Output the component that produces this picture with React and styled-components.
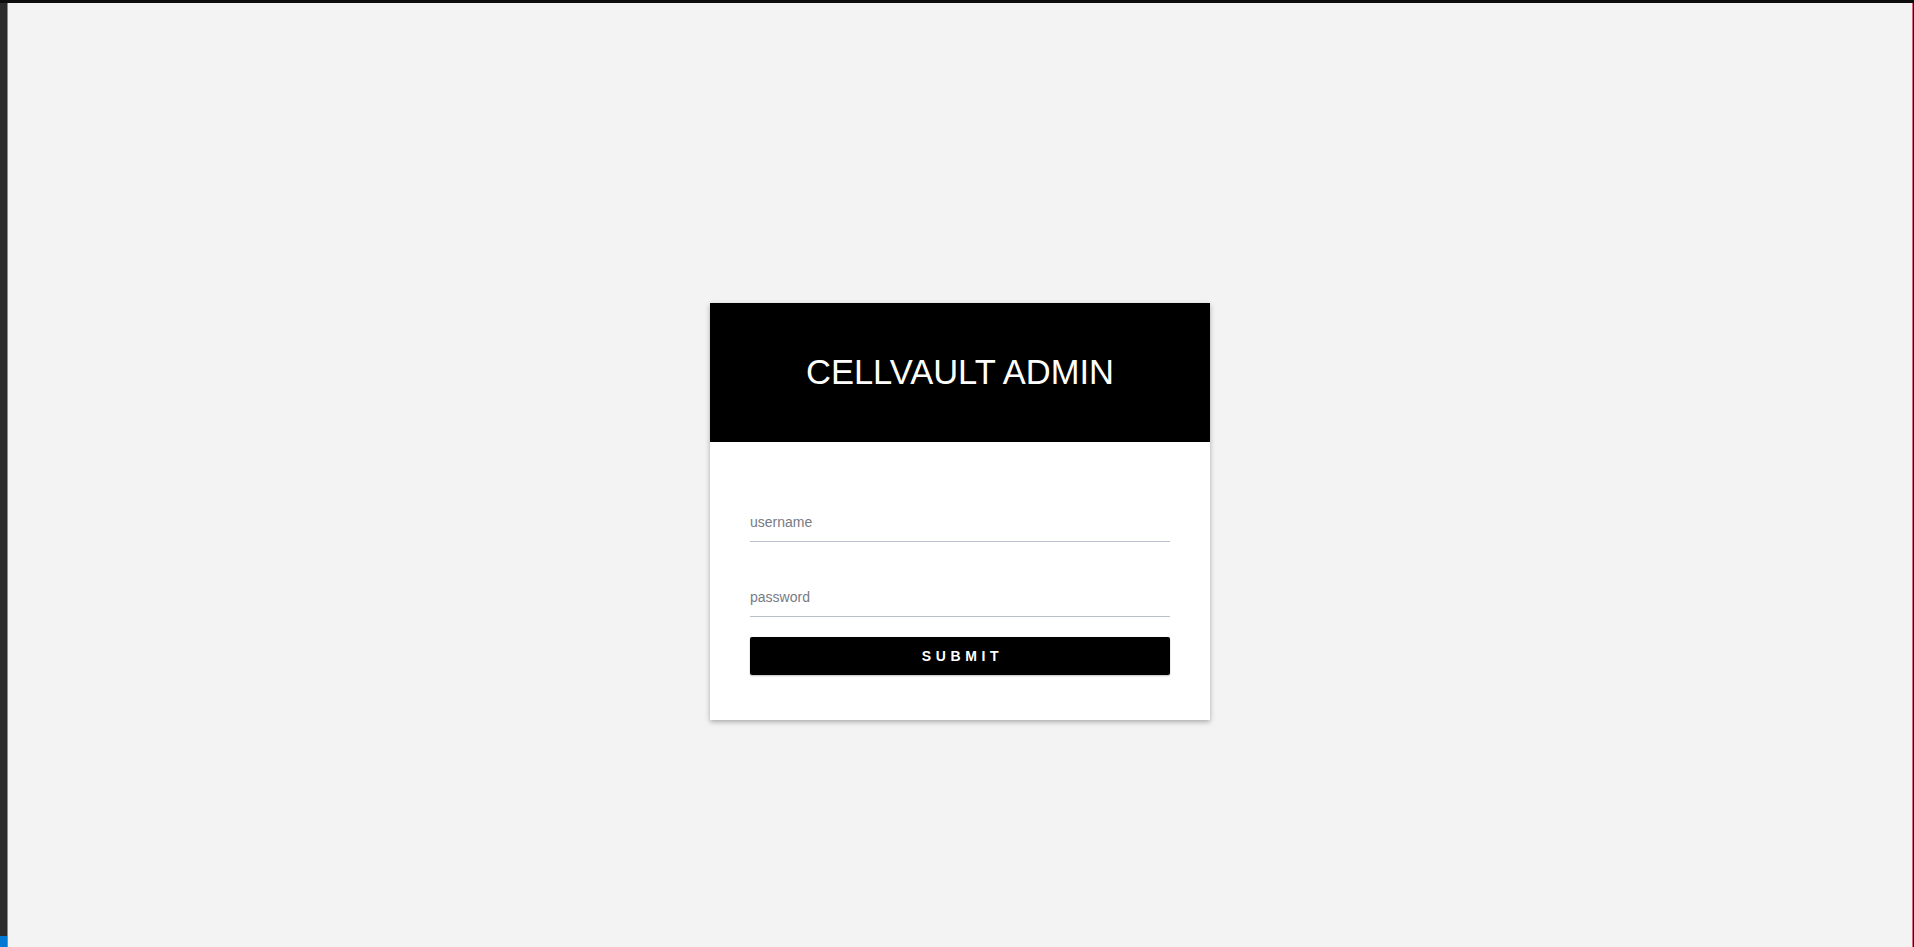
import React from "react";
import styled, { createGlobalStyle } from "styled-components";

const GlobalStyle = createGlobalStyle`
  html, body {
    margin: 0;
    padding: 0;
    height: 100%;
    background: #2b2b2b;
    font-family: "Liberation Sans", Arial, sans-serif;
  }
  #root {
    height: 100%;
  }
  * {
    box-sizing: border-box;
  }
`;

const Frame = styled.div`
  display: flex;
  flex-direction: column;
  height: 947px;
  width: 1914px;
`;

const TopBar = styled.div`
  height: 3px;
  background: #0d0d0d;
`;

const Row = styled.div`
  flex: 1;
  display: flex;
`;

const Rail = styled.div`
  width: 7px;
  background: #2b2b2b;
  display: flex;
  flex-direction: column;
  justify-content: flex-end;
`;

const RailBadge = styled.div`
  height: 11px;
  background: #0078d4;
`;

const Main = styled.main`
  flex: 1;
  background: #f3f3f3;
  border-left: 1px solid #d9667f;
  border-right: 1px solid #d9667f;
  display: flex;
  justify-content: center;
  align-items: flex-start;
  padding-top: 300px;
`;

const EdgeRight = styled.div`
  width: 1px;
  background: #1a1a1a;
`;

const Card = styled.div`
  width: 500px;
  background: #fff;
  box-shadow: 0 2px 5px rgba(0, 0, 0, 0.3);
`;

const Header = styled.div`
  height: 139px;
  background: #000;
  display: flex;
  align-items: center;
  justify-content: center;
`;

const Title = styled.h1`
  margin: 0;
  color: #fff;
  font-size: 34.5px;
  font-weight: 400;
  line-height: 1;
`;

const Form = styled.form`
  display: flex;
  flex-direction: column;
  padding: 58px 40px 45px;
`;

const Input = styled.input`
  height: 42px;
  border: none;
  border-bottom: 1px solid #b9bfca;
  outline: none;
  padding: 3px 0 0;
  font-family: "Liberation Sans", Arial, sans-serif;
  font-size: 14px;
  color: #333;
  background: transparent;
  margin-bottom: ${(p) => p.$gap || 0}px;

  &::placeholder {
    color: #777b84;
  }
`;

const Button = styled.button`
  height: 38px;
  border: none;
  border-radius: 2px;
  background: #000;
  color: #fff;
  font-family: "Liberation Sans", Arial, sans-serif;
  font-size: 14px;
  font-weight: 700;
  letter-spacing: 4.6px;
  padding: 0 0 0 5px;
  box-shadow: 0 1px 2px rgba(0, 0, 0, 0.25);
  cursor: pointer;
`;

export default function App() {
  return (
    <>
      <GlobalStyle />
      <Frame>
        <TopBar />
        <Row>
          <Rail>
            <RailBadge />
          </Rail>
          <Main>
            <Card>
              <Header>
                <Title>CELLVAULT ADMIN</Title>
              </Header>
              <Form onSubmit={(e) => e.preventDefault()}>
                <Input placeholder="username" $gap={33} />
                <Input type="password" placeholder="password" $gap={20} />
                <Button type="submit">SUBMIT</Button>
              </Form>
            </Card>
          </Main>
          <EdgeRight />
        </Row>
      </Frame>
    </>
  );
}
